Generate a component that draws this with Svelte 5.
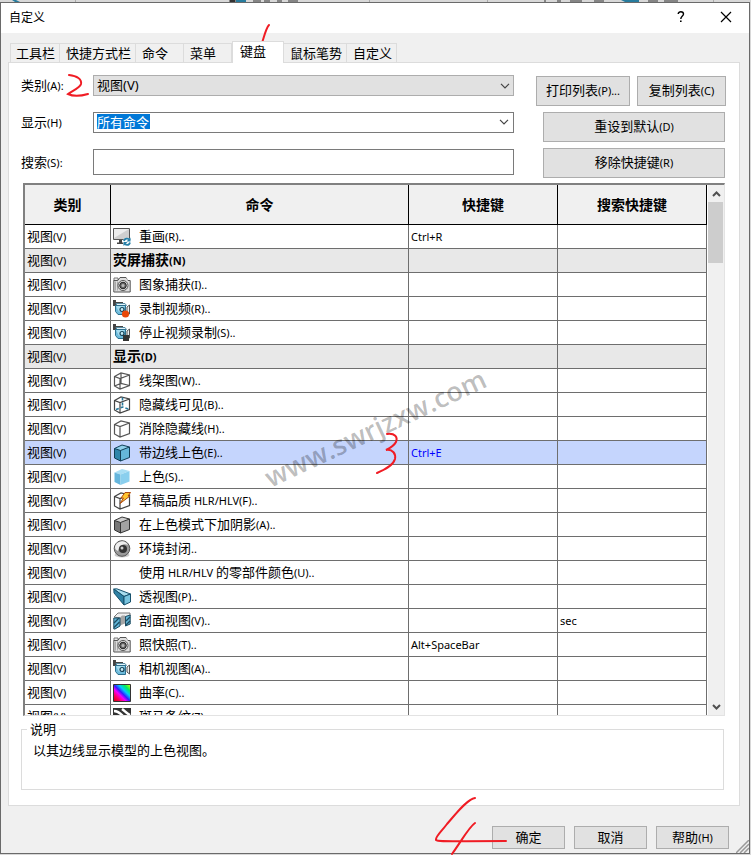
<script>
  const tabs = ["工具栏", "快捷方式栏", "命令", "菜单", "键盘", "鼠标笔势", "自定义"];
  let activeTab = $state("键盘");
  let category = $state("视图(V)");
  let show = $state("所有命令");
  let search = $state("");
  let selected = $state(9);

  const commands = [
    { icon: "redraw", name: "重画", tail: "(R)..", key: "Ctrl+R" },
    { name: "荧屏捕获", tail: "(N)", group: true },
    { icon: "camera", name: "图象捕获", tail: "(I).." },
    { icon: "record", name: "录制视频", tail: "(R).." },
    { icon: "stop", name: "停止视频录制", tail: "(S).." },
    { name: "显示", tail: "(D)", group: true },
    { icon: "wireframe", name: "线架图", tail: "(W).." },
    { icon: "hidden", name: "隐藏线可见", tail: "(B).." },
    { icon: "removed", name: "消除隐藏线", tail: "(H).." },
    { icon: "edges", name: "带边线上色", tail: "(E)..", key: "Ctrl+E" },
    { icon: "shaded", name: "上色", tail: "(S).." },
    { icon: "draft", name: "草稿品质", tail: " HLR/HLV(F).." },
    { icon: "shadow", name: "在上色模式下加阴影", tail: "(A).." },
    { icon: "ambient", name: "环境封闭", tail: ".." },
    { icon: "none", name: "使用", tail: " HLR/HLV ", rest: "的零部件颜色", end: "(U).." },
    { icon: "perspective", name: "透视图", tail: "(P).." },
    { icon: "section", name: "剖面视图", tail: "(V)..", searchKey: "sec" },
    { icon: "camera", name: "照快照", tail: "(T)..", key: "Alt+SpaceBar" },
    { icon: "camcorder", name: "相机视图", tail: "(A).." },
    { icon: "curvature", name: "曲率", tail: "(C).." },
    { icon: "zebra", name: "斑马条纹", tail: "(Z).." },
  ];

  const cubeFill = {
    edges: ["#8fd0ea", "#2f86ab", "#65b7da", "#123f57"],
    shaded: ["#a9def4", "#65b5dc", "#8acfee", "none"],
    shadow: ["#cfcfcf", "#777", "#a2a2a2", "#333"],
  };
</script>

{#snippet chevron()}
  <svg class="chevron" width="10" height="6" viewBox="0 0 10 6" aria-hidden="true">
    <path d="M1 .8 5 4.800 9 .8" fill="none" stroke="#444" stroke-width="1.200" />
  </svg>
{/snippet}

{#snippet camcorder()}
  <path d="M0 0h3v2h7v1H3v3H0z" fill="#444" />
  <path d="M3 3.500h9l1.500 2H4z" fill="#e4f3f9" stroke="#5a8ba0" />
  <path d="M2.500 5.500h10v9H5l-2.500-3z" fill="#6dbada" stroke="#2b6f8e" />
  <path d="M3 6h9l-6 6z" fill="#a6dcef" />
  <path d="m14 7 2.500-2v9L14 12z" fill="#eee" stroke="#555" />
  <circle cx="9" cy="9.500" r="2" fill="#c8ecf7" stroke="#163f53" stroke-width="1.200" />
{/snippet}

{#snippet icon(name)}
  <svg class="icon" width="18" height="18" viewBox="0 0 18 18" aria-hidden="true">
    {#if name === "redraw"}
      <path d="M.5.500h16v11H.5z" fill="#cfcfcf" stroke="#555" />
      <path d="M1 1h15L1 10z" fill="#ededed" />
      <path d="M6 12h3v3H6zM4 14.500h7V16H4z" fill="#444" />
      <circle cx="14" cy="14" r="4" fill="#fff" />
      <path d="M11 13c1-4 5-2 6-1M17 14.500c-1 4-5 2-6 1" fill="none" stroke="#2780a8" stroke-width="1.800" />
      <path d="M17.500 9.500v4h-4zM10.500 18v-4h4z" fill="#2780a8" />
    {:else if name === "camera"}
      <path d="M1 5V2h4v3" fill="#eee" stroke="#777" />
      <path d="M.8 4.500h4L7 1.500h6l2 3h2.200v11.500H.8z" fill="#dedede" stroke="#555" />
      <path d="M2.500 5.500v9M4.500 5.500v9" stroke="#aaa" />
      <circle cx="10" cy="9.500" r="5" fill="#eee" stroke="#555" />
      <circle cx="10" cy="9.500" r="3.300" fill="#666" stroke="#222" />
      <circle cx="10" cy="9.500" r="1.500" fill="#bbb" />
      <path d="M13.500 3h2" stroke="#fff" />
    {:else if name === "camcorder"}
      {@render camcorder()}
    {:else if name === "record"}
      {@render camcorder()}
      <circle cx="12.500" cy="14" r="3.600" fill="#e84808" />
    {:else if name === "stop"}
      {@render camcorder()}
      <path d="M10 11h6v6h-6z" fill="#333" />
    {:else if name === "wireframe"}
      <path d="M1.500 4.500 8 1l8.500 2v10.500L7 17l-5.500-3zM1.500 4.500 7 6.500 16.500 3M7 6.500V17M8 1v10.500M1.500 14 8 11.500l8.500 2" fill="none" stroke="#555" stroke-width="1.200" />
    {:else if name === "hidden"}
      <path d="M1.500 4.500 8 1l8.500 2v10.500L7 17l-5.500-3zM1.500 4.500 7 6.500 16.500 3M7 6.500V17" fill="#fff" stroke="#444" stroke-width="1.200" />
      <path d="M9.500 1.500v10M3 13.500 9.500 11l6 2" fill="none" stroke="#28799c" stroke-width="1.600" stroke-dasharray="3 2" />
    {:else if name === "removed"}
      <path d="M1.500 4.500 8 1l8.500 2v10.500L7 17l-5.500-3zM1.500 4.500 7 6.500 16.500 3M7 6.500V17" fill="#fff" stroke="#555" stroke-width="1.200" />
    {:else if cubeFill[name]}
      <path d="M1.500 4.500 9 1l7.500 2-9 3.500z" fill={cubeFill[name][0]} />
      <path d="m1.500 4.500 6 2V17l-6-3z" fill={cubeFill[name][1]} />
      <path d="m7.500 6.500 9-3.500v10.500l-9 3.500z" fill={cubeFill[name][2]} />
      <path d="M1.500 4.500 9 1l7.500 2v10.500l-9 3.500-6-3zM1.500 4.500l6 2 9-3.500M7.500 6.500V17" fill="none" stroke={cubeFill[name][3]} />
    {:else if name === "draft"}
      <path d="M1.500 4.500 8 1l8.500 2v10.500L7 17l-5.500-3zM1.500 4.500 7 6.500 16.500 3M7 6.500V17" fill="#fff" stroke="#444" stroke-width="1.200" />
      <path d="M12 .5h5.500l-2.500 3.500h2L7 11.500 10.500 6H8z" fill="#ffc52e" stroke="#ad4b10" />
    {:else if name === "ambient"}
      <ellipse cx="9" cy="15" rx="7.500" ry="2.500" fill="#ccc" />
      <circle cx="9" cy="8.500" r="7.800" fill="#999" stroke="#555" />
      <path d="M2 7a7 7 0 0 1 13-2c-5-2-9 1-10 6-2-1-3-2-3-4z" fill="#eee" />
      <circle cx="10" cy="9" r="4" fill="#333" />
      <circle cx="9" cy="8" r="1.500" fill="#ccc" />
    {:else if name === "perspective"}
      <path d="m.8 1 3-.2L17.500 6 11 8.500z" fill="#a8dced" stroke="#17516c" />
      <path d="M.8 1 11 8.500V17L1 5z" fill="#2f81a4" stroke="#17516c" />
      <path d="m11 8.500 6.500-2.500v8L11 17z" fill="#79c4df" stroke="#17516c" />
    {:else if name === "section"}
      <path d="M1 5 5 1h12v3l-5 1-5 1z" fill="#eee" stroke="#777" />
      <path d="M7 5.500 9 3.500h3v8l-5 2z" fill="#a5a5a5" />
      <path d="M.8 6H7v8l-5 3H.8zM12.500 4.500l4.700-1.500v9l-4.700 2z" fill="#62b6d8" stroke="#1d4c62" />
      <path d="m1 11 5-5M1 15.500l5.500-5.500M13 9l4-4M13 13l4-4" stroke="#1d4c62" stroke-width="1.300" />
    {:else if name === "curvature"}
      <defs>
        <linearGradient id="rainbow" x1="0" y1="1" x2="1" y2="0">
          <stop offset="0" stop-color="#d00000" />
          <stop offset=".22" stop-color="#ff0060" />
          <stop offset=".38" stop-color="#f000ff" />
          <stop offset=".5" stop-color="#3020ff" />
          <stop offset=".64" stop-color="#00c8ff" />
          <stop offset=".8" stop-color="#00ee60" />
          <stop offset="1" stop-color="#e8ff00" />
        </linearGradient>
      </defs>
      <path d="M.5.500h17v17H.5z" fill="url(#rainbow)" stroke="#333" />
    {:else if name === "zebra"}
      <path d="M0 0h18v18H0z" fill="#333" />
      <path d="M1 3c7 0 8 6 16 11M9 1c3 2 4 4 8 6M0 10c5 1 7 4 10 8" fill="none" stroke="#fff" stroke-width="2.500" />
    {/if}
  </svg>
{/snippet}

<div class="desktop">
  <svg class="behind" width="751" height="2" viewBox="0 0 751 2" aria-hidden="true">
    <path d="M12 0h4l4 2h-5zM236 0h10v2h-10zM621 0h18v2h-14z" fill="#277c9e" />
    <path d="M230 0h5v2h-5zM253 1h8M264 1h6M277 1h5M288 1h10M545 0v2M557 1h4M570 1h12M594 1h10M648 1h10M664 1h14" fill="#333" stroke="#333" />
    <path d="M75.500 0v2M487.500 0v2M369.500 0v2M713.500 0v2" stroke="#aaa" />
  </svg>

  <main class="dialog">
    <header class="titlebar">
      <span class="title">自定义</span>
      <button class="caption" aria-label="帮助">
        <svg width="8" height="12" viewBox="0 0 8 12">
          <path d="M1.200 3C1.200 0 6.500 0 6.500 3c0 2-2.700 2-2.700 5" fill="none" stroke="#000" stroke-width="1.400" />
          <path d="M3 9.500h1.600V11H3z" />
        </svg>
      </button>
      <button class="caption" aria-label="关闭">
        <svg width="12" height="12" viewBox="0 0 12 12">
          <path d="m1 1 10 10M11 1 1 11" stroke="#000" stroke-width="1.200" />
        </svg>
      </button>
    </header>

    <div class="tabs" role="tablist">
      {#each tabs as tab}
        <button
          class="tab"
          class:active={tab === activeTab}
          role="tab"
          aria-selected={tab === activeTab}
          onclick={() => (activeTab = tab)}>{tab}</button>
      {/each}
    </div>

    <section class="panel">
      <div class="top">
        <div class="fields">
          <label for="category">类别<small>(A):</small></label>
          <div class="drop">
            <select id="category" bind:value={category}>
              <option>视图(V)</option>
              <option>文件(F)</option>
            </select>
            {@render chevron()}
          </div>
          <label for="show">显示<small>(H)</small></label>
          <div class="combo">
            <input id="show" bind:value={show} />
            <button aria-label="打开列表">{@render chevron()}</button>
          </div>
          <label for="search">搜索<small>(S):</small></label>
          <input class="search" id="search" bind:value={search} />
        </div>
        <div class="actions">
          <div class="pair">
            <button class="btn">打印列表<small>(P)...</small></button>
            <button class="btn">复制列表<small>(C)</small></button>
          </div>
          <button class="btn wide">重设到默认<small>(D)</small></button>
          <button class="btn wide">移除快捷键<small>(R)</small></button>
        </div>
      </div>

      <div class="list">
        <div class="rows">
          <table>
            <colgroup>
              <col class="col-category" />
              <col />
              <col class="col-key" />
              <col class="col-key" />
            </colgroup>
            <thead>
              <tr><th>类别</th><th>命令</th><th>快捷键</th><th>搜索快捷键</th></tr>
            </thead>
            <tbody>
              {#each commands as command, i}
                <tr class:group={command.group} class:selected={i === selected} onclick={() => (selected = i)}>
                  <td>视图<small>(V)</small></td>
                  <td>
                    <div class="command">
                      {#if command.icon}{@render icon(command.icon)}{/if}
                      <span>{command.name}<small>{command.tail}</small>{command.rest ?? ""}<small>{command.end ?? ""}</small></span>
                    </div>
                  </td>
                  <td class="key"><small>{command.key ?? ""}</small></td>
                  <td><small>{command.searchKey ?? ""}</small></td>
                </tr>
              {/each}
            </tbody>
          </table>
        </div>
        <div class="scrollbar">
          <button aria-label="向上滚动">
            <svg width="9" height="6" viewBox="0 0 9 6"><path d="m1 5 3.500-3.500L8 5" fill="none" stroke="#505050" stroke-width="2" /></svg>
          </button>
          <div class="thumb"></div>
          <button aria-label="向下滚动">
            <svg width="9" height="6" viewBox="0 0 9 6"><path d="m1 1 3.500 3.500L8 1" fill="none" stroke="#505050" stroke-width="2" /></svg>
          </button>
        </div>
      </div>

      <fieldset>
        <legend>说明</legend>
        <p>以其边线显示模型的上色视图。</p>
      </fieldset>
    </section>

    <footer>
      <button class="btn">确定</button>
      <button class="btn">取消</button>
      <button class="btn">帮助<small>(H)</small></button>
    </footer>

    <svg class="grip" width="13" height="13" viewBox="0 0 13 13" aria-hidden="true">
      <path d="M0 13 13 0M4 13l9-9M8 13l5-5" stroke="#999" stroke-width="1.500" />
    </svg>
  </main>

  <div class="watermark">www.swrjzxw.com</div>

  <!-- red pen marks for the steps -->
  <svg class="marks" width="751" height="855" viewBox="0 0 751 855" aria-hidden="true">
    <path d="M269 25c-3 3-5 12-7 18" />
    <path d="M69 75c8 1 13 4 12 9-1 4-9 7-13 10 6 3 13 2 20 0" />
    <path d="M387 434c8-1 11 3 9 8-2 4-6 6-10 8 7-1 10 4 9 9-2 7-11 11-18 14" />
    <path d="M475 798c-8 1-20 17-28 26-6 8-12 13-11 16 2 2 15 1 70 1M475 823c-6 4-13 17-23 31" />
  </svg>
</div>

<style>
  :global(body) {
    margin: 0;
  }

  .desktop {
    position: relative;
    box-sizing: border-box;
    height: 100vh;
    display: flex;
    flex-direction: column;
    padding: 0 1px 1px 0;
    overflow: hidden;
    background: #d8d8d8;
    color: #000;
    font-family: "Noto Sans", "Noto Sans CJK SC", sans-serif;
    font-size: 13px;
    line-height: 16px;
  }

  .behind {
    display: block;
    flex: none;
  }

  .dialog {
    position: relative;
    flex: 1;
    min-height: 0;
    display: flex;
    flex-direction: column;
    border: 1px solid #6a6a6a;
    background: #f0f0f0;
  }

  button,
  input,
  select {
    box-sizing: border-box;
    margin: 0;
    padding: 0;
    border: 0;
    border-radius: 0;
    background: none;
    color: inherit;
    font: inherit;
  }

  small {
    font-size: 11px;
    white-space: pre;
  }

  .titlebar {
    display: flex;
    align-items: center;
    height: 30px;
    padding-right: 1px;
    background: #fff;
  }

  .title {
    flex: 1;
    padding-left: 8px;
    font-size: 12px;
  }

  .caption {
    width: 45px;
    height: 28px;
  }

  .tabs {
    display: flex;
    align-items: flex-end;
    height: 29px;
    padding-left: 9px;
  }

  .tab {
    height: 19px;
    min-width: 48px;
    padding: 0 4px 0 6px;
    border-top: 1px solid #dcdcdc;
    border-right: 1px solid #dcdcdc;
    text-align: left;
  }

  .tab:first-child {
    border-left: 1px solid #dcdcdc;
    padding-left: 5px;
  }

  .tab.active {
    position: relative;
    z-index: 1;
    min-width: 52px;
    height: 22px;
    margin-bottom: -1px;
    padding: 0 7px 4px;
    border-left: 1px solid #dcdcdc;
    background: #fff;
  }

  .panel {
    flex: 1;
    min-height: 0;
    display: flex;
    flex-direction: column;
    margin: 0 9px 0 7px;
    padding: 12px 15px 15px 12px;
    border: 1px solid #dcdcdc;
    background: #fff;
  }

  .top {
    display: flex;
    align-items: flex-start;
    gap: 22px;
    margin-right: -2px;
    padding-bottom: 4px;
  }

  .fields {
    flex: 1;
    display: grid;
    grid-template-columns: 72px 1fr;
    grid-template-rows: 21px 21px 26px;
    row-gap: 16px;
    align-items: center;
  }

  .drop {
    position: relative;
  }

  .drop select {
    display: block;
    width: 100%;
    height: 21px;
    padding: 0 20px 1px 3px;
    appearance: none;
    border: 1px solid #adadad;
    background: #e1e1e1;
  }

  .drop :global(.chevron) {
    position: absolute;
    top: 8px;
    right: 4px;
    pointer-events: none;
  }

  .combo {
    box-sizing: border-box;
    display: flex;
    align-items: center;
    justify-content: space-between;
    height: 21px;
    padding: 0 4px 2px 3px;
    border: 1px solid #7a7a7a;
  }

  .combo input {
    width: 53px;
    height: 15px;
    background: #0078d7;
    color: #fff;
  }

  .combo button {
    display: flex;
  }

  .search {
    width: 100%;
    height: 26px;
    padding: 0 3px;
    border: 1px solid #7a7a7a;
  }

  .actions {
    display: flex;
    flex-direction: column;
    gap: 6px;
    width: 190px;
    padding-top: 1px;
  }

  .pair {
    display: flex;
    gap: 7px;
  }

  .btn {
    height: 30px;
    padding: 0 0 1px;
    border: 1px solid #adadad;
    background: #e1e1e1;
  }

  .pair .btn {
    flex: 89;
  }

  .pair .btn:first-child {
    flex: 94;
  }

  .wide {
    margin: 0 1px 0 7px;
  }

  .list {
    flex: 1;
    min-height: 0;
    display: flex;
    margin: 1px -1px 0 2px;
    border: 1px solid #e3e3e3;
    border-top: 2px solid #808080;
    border-left: 2px solid #808080;
  }

  .rows {
    flex: 1;
    overflow: hidden;
  }

  table {
    width: 100%;
    table-layout: fixed;
    border-collapse: separate;
    border-spacing: 0;
  }

  .col-category {
    width: 86px;
  }

  .col-key {
    width: 149px;
  }

  th {
    height: 39px;
    padding: 0;
    border-right: 1px solid #000;
    border-bottom: 1px solid #000;
    background: #f0f0f0;
    font-size: 14px;
  }

  td {
    height: 23px;
    padding: 0 2px;
    border-right: 1px solid #6e6e6e;
    border-bottom: 1px solid #6e6e6e;
    line-height: 18px;
    white-space: nowrap;
  }

  .group td {
    background: #e8e8e8;
  }

  .group .command {
    font-size: 14px;
    font-weight: bold;
  }

  .selected td {
    background: #c5d5fd;
  }

  .selected .key {
    color: #00f;
  }

  .command {
    display: flex;
    align-items: center;
    gap: 8px;
    height: 20px;
  }

  .scrollbar {
    display: flex;
    flex-direction: column;
    width: 16px;
    margin-left: 1px;
    background: #f0f0f0;
  }

  .scrollbar button {
    display: grid;
    place-items: center;
    height: 17px;
  }

  .thumb {
    height: 61px;
    margin-right: 1px;
    margin-bottom: auto;
    background: #cdcdcd;
  }

  fieldset {
    box-sizing: border-box;
    height: 69px;
    margin: 5px 0 0;
    padding: 5px 11px;
    border: 1px solid #dcdcdc;
  }

  legend {
    margin-left: -6px;
    padding: 0 3px;
  }

  p {
    margin: 0;
  }

  footer {
    display: flex;
    justify-content: flex-end;
    gap: 9px;
    padding: 20px 20px 4px 0;
  }

  footer .btn {
    width: 73px;
    height: 23px;
  }

  .grip {
    position: absolute;
    right: 0;
    bottom: 0;
  }

  .watermark {
    position: absolute;
    top: 412px;
    left: 255px;
    color: rgba(0, 0, 0, 0.27);
    font-family: "Open Sans", sans-serif;
    font-size: 27px;
    font-weight: 600;
    line-height: 32px;
    transform: rotate(-25deg);
    pointer-events: none;
  }

  .marks {
    position: absolute;
    top: 0;
    left: 0;
    fill: none;
    stroke: #f01c24;
    stroke-width: 2;
    stroke-linecap: round;
    pointer-events: none;
  }
</style>
